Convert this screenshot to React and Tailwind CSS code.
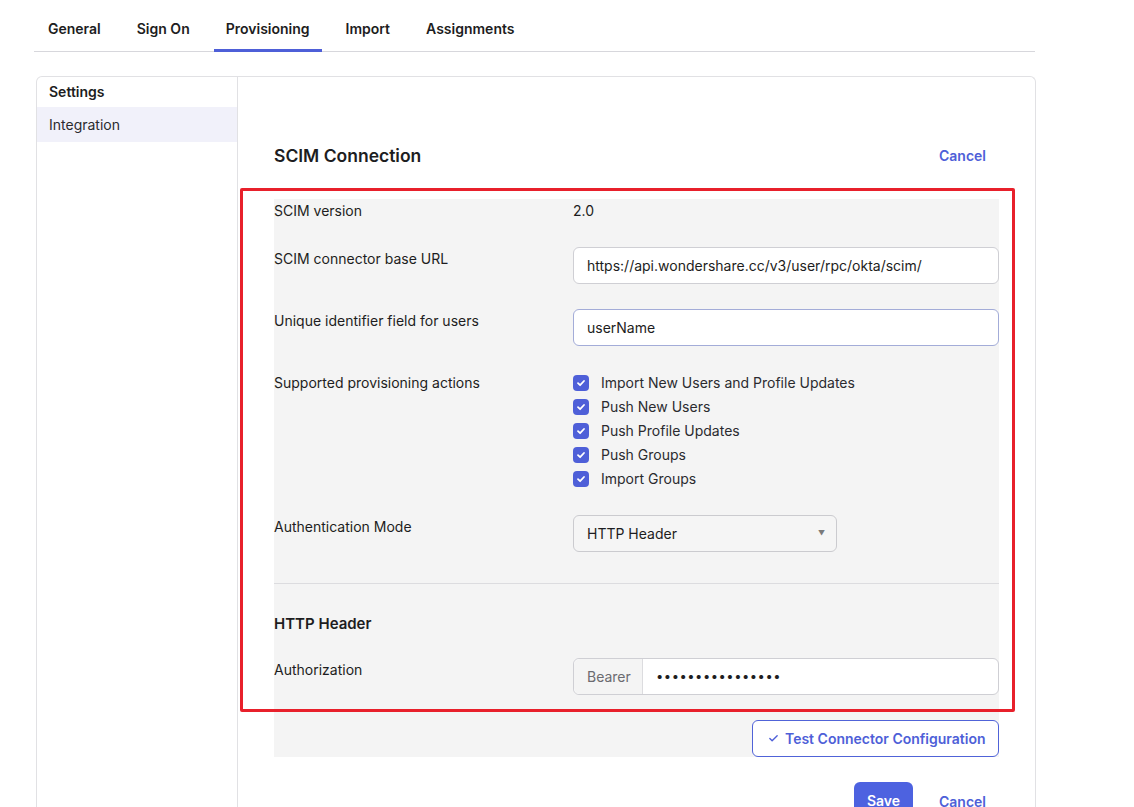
import { Check } from 'lucide-react';

const tabs = ['General', 'Sign On', 'Provisioning', 'Import', 'Assignments'];

const actions = [
  'Import New Users and Profile Updates',
  'Push New Users',
  'Push Profile Updates',
  'Push Groups',
  'Import Groups',
];

const Row = ({ label, className = '', labelClass = 'pt-[2px] leading-5', children }) => (
  <div className={`flex ${className}`}>
    <div className={`w-[299px] shrink-0 text-sm text-[#1d1d21] ${labelClass}`}>{label}</div>
    <div className="flex-1">{children}</div>
  </div>
);

const Checkbox = () => (
  <span className="flex h-4 w-4 items-center justify-center rounded-[4px] bg-[#4e5fd8]">
    <svg width="10" height="10" viewBox="0 0 10 10" fill="none">
      <path d="M2 5.2 L4.1 7.2 L8 3" stroke="white" strokeWidth="1.8" strokeLinecap="round" strokeLinejoin="round" />
    </svg>
  </span>
);

const App = () => {
  return (
    <div className="min-h-screen bg-white font-['Inter',sans-serif] text-[#1d1d21]">
      {/* Tabs */}
      <div className="ml-[34px] flex w-[1001px] gap-3 border-b border-[#d7d7dc] pl-[2px]">
        {tabs.map((t) => (
          <div
            key={t}
            className={`-mb-px border-b-[3px] px-3 pb-[10px] pt-[19px] text-sm font-semibold leading-5 ${
              t === 'Provisioning' ? 'border-[#4e5fd8]' : 'border-transparent'
            }`}
          >
            {t}
          </div>
        ))}
      </div>

      {/* Card */}
      <div className="ml-[36px] mt-[24px] flex h-[760px] w-[1000px] rounded-t-md border border-b-0 border-[#e1e1e4]">
        {/* Sidebar */}
        <div className="w-[201px] shrink-0 border-r border-[#e1e1e4]">
          <div className="flex h-[30px] items-center pl-3 text-sm font-semibold">Settings</div>
          <div className="flex h-[35px] items-center bg-[#f1f1fa] pl-3 text-sm text-[#2b2b2f]">Integration</div>
        </div>

        {/* Content */}
        <div className="relative flex-1 px-[36px] pt-[65px]">
          <div className="flex items-center justify-between">
            <h2 className="text-[17.5px] font-semibold leading-7">SCIM Connection</h2>
            <button className="mr-[13px] text-sm font-semibold text-[#4e5fd8]">Cancel</button>
          </div>

          {/* Gray panel */}
          <div className="mt-[29px] bg-[#f4f4f4]">
            <Row label="SCIM version" className="pt-[2px]" labelClass="leading-5">
              <div className="text-sm leading-5">2.0</div>
            </Row>

            <Row label="SCIM connector base URL" className="mt-[26px]">
              <div className="flex h-[37px] items-center rounded-md border border-[#cfcfd4] bg-white px-[13px] text-sm">
                https://api.wondershare.cc/v3/user/rpc/okta/scim/
              </div>
            </Row>

            <Row label="Unique identifier field for users" className="mt-[25px]">
              <div className="flex h-[37px] items-center rounded-md border border-[#a3acd8] bg-white px-[13px] text-sm">
                userName
              </div>
            </Row>

            <Row label="Supported provisioning actions" className="mt-[25px]" labelClass="leading-6">
              <div className="flex flex-col">
                {actions.map((a) => (
                  <div key={a} className="flex h-6 items-center gap-3 text-sm text-[#2b2b2f]">
                    <Checkbox />
                    <span>{a}</span>
                  </div>
                ))}
              </div>
            </Row>

            <Row label="Authentication Mode" className="mt-[24px]">
              <div className="flex h-[37px] w-[264px] items-center justify-between rounded-md border border-[#cbcbcf] bg-[#f5f5f5] pl-[13px] pr-[11px] text-sm">
                <span>HTTP Header</span>
                <span className="text-[7px] text-[#7a7a7a]">▼</span>
              </div>
            </Row>

            <div className="mt-[31px] border-t border-[#dcdcdf]" />

            <h3 className="mt-[28px] text-[15px] font-semibold leading-6">HTTP Header</h3>

            <Row label="Authorization" className="mt-[22px]">
              <div className="flex h-[37px] rounded-md border border-[#cfcfd4] bg-white text-sm">
                <div className="flex w-[69px] items-center rounded-l-md border-r border-[#dcdcdf] bg-[#f4f4f4] pl-[13px] text-[#6b6b70]">
                  Bearer
                </div>
                <div className="flex items-center pl-[13px] text-[13px] tracking-[0.5px] text-[#1d1d21]">
                  ••••••••••••••••
                </div>
              </div>
            </Row>

            <div className="mt-[25px] flex justify-end">
              <button className="flex h-[37px] w-[247px] items-center gap-[6px] rounded-md border border-[#5063d8] bg-white pl-[15px] text-sm font-semibold text-[#4e5fd8]">
                <Check size={11} strokeWidth={3} />
                Test Connector Configuration
              </button>
            </div>
          </div>

          <div className="mt-[25px] flex items-center justify-end gap-[26px]">
            <button className="h-[37px] w-[59px] rounded-md bg-[#4d62e0] text-sm font-semibold text-white">Save</button>
            <button className="mr-[13px] pt-[2px] text-sm font-semibold text-[#4e5fd8]">Cancel</button>
          </div>

          {/* Red annotation box */}
          <div className="pointer-events-none absolute left-[2px] top-[111px] h-[524px] w-[775px] rounded-[2px] border-[3px] border-[#e8202b]" />
        </div>
      </div>
    </div>
  );
};

export default App;
